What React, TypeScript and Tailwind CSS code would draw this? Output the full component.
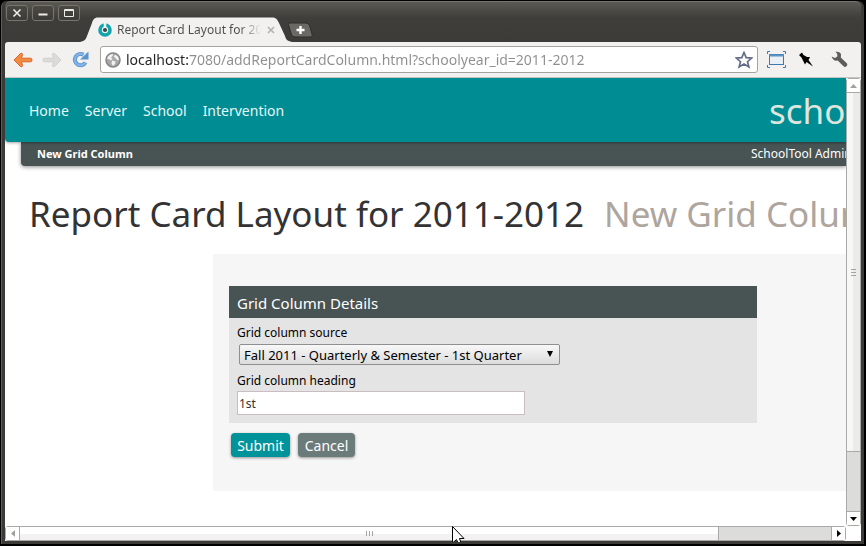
import { useState } from "react";
import type { ReactNode } from "react";

const navItems = ["Home", "Server", "School", "Intervention"];

function WindowButton({ label, children }: { label: string; children: ReactNode }) {
  return (
    <button
      type="button"
      aria-label={label}
      className="flex h-4 w-[22px] items-center justify-center rounded-[3px] border border-[#77756e] bg-linear-to-b from-[#4a4943] to-[#3c3b37]"
    >
      <svg width="12" height="10" viewBox="0 0 12 10" fill="none" stroke="#eeece6">
        {children}
      </svg>
    </button>
  );
}

function TitleBar() {
  return (
    <header className="flex h-[41px] shrink-0 items-start rounded-t-md border-t border-[#77756e] bg-linear-to-b from-[#5a5953] via-[#3f3e3a] via-40% to-[#3c3b37] pl-[1px]">
      <div className="flex gap-1 pt-[3px]">
        <WindowButton label="Close">
          <path d="M2.5 1.5l7 7M9.5 1.5l-7 7" strokeWidth="1.6" />
        </WindowButton>
        <WindowButton label="Minimize">
          <path d="M1.5 6.5h9" strokeWidth="2" />
        </WindowButton>
        <WindowButton label="Maximize">
          <path d="M1.5 1.5h9v7h-9zM1.5 2.5h9" />
        </WindowButton>
      </div>
      <div className="flex h-10 items-end">
        <div className="relative flex h-[25px] w-[212px] items-center pr-4 pl-[18px]">
          <svg className="absolute inset-0" width="212" height="25" viewBox="0 0 212 25">
            <path
              d="M0 25C5 24 6 22 7 19L12 6C13 2 15 .5 18 .5H192C196 .5 197 2 199 6L205 19C206 23 208 24 212 25Z"
              fill="#f2f1f0"
            />
          </svg>
          <svg className="relative shrink-0" width="14" height="14" viewBox="0 0 14 14">
            <circle cx="7" cy="7" r="5" fill="none" stroke="#0ea5ad" strokeWidth="3.6" />
            <path d="M5.7 0h2.6v5H5.7z" fill="#f2f1f0" />
            <circle cx="7" cy="7" r="2.1" fill="#37474a" />
          </svg>
          <span className="relative ml-[5px] w-[144px] overflow-hidden bg-linear-to-r from-[#4c4c4c] from-85% to-[#f2f1f0] bg-clip-text text-xs whitespace-nowrap text-transparent">
            Report Card Layout for 2011-2012
          </span>
          <button type="button" aria-label="Close tab" className="relative ml-[6px]">
            <svg width="8" height="8" viewBox="0 0 8 8" stroke="#b5b3b0" strokeWidth="1.7">
              <path d="M1 1l6 6M7 1L1 7" />
            </svg>
          </button>
        </div>
        <button type="button" aria-label="New tab" className="-ml-1 mb-1">
          <svg width="25" height="16" viewBox="0 0 25 16">
            <path
              d="M2 1H17C20 1 21 2 22 5L24 12C24.500 14 24 15 22 15H8C5 15 4 14 3 11L.8 4C.3 2 .5 1 2 1Z"
              fill="#6a6963"
              stroke="#2f2e2b"
            />
            <path d="M12.500 4v8M8.500 8h8" stroke="#fff" strokeWidth="2.4" />
          </svg>
        </button>
      </div>
    </header>
  );
}

function ArrowIcon({ flip, fill, stroke }: { flip?: boolean; fill: string; stroke: string }) {
  return (
    <svg className={flip ? "-scale-x-100" : ""} width="20" height="16" viewBox="0 0 20 16">
      <path
        d="M1 8L7.500 1.500Q9.500 .5 9.500 2.500L8.500 6.200H17.500Q19 6.200 19 8T17.500 9.800H8.500L9.500 13.500Q9.500 15.500 7.500 14.500Z"
        fill={fill}
        stroke={stroke}
      />
    </svg>
  );
}

function Toolbar() {
  return (
    <div className="flex h-9 shrink-0 items-center rounded-t-[3px] border-b border-[#c5c3c0] bg-[#f2f1f0] pr-[13px] pl-2">
      <div className="flex items-center gap-[9px]">
        <button type="button" aria-label="Back">
          <ArrowIcon fill="#f28a42" stroke="#d9672a" />
        </button>
        <button type="button" aria-label="Forward">
          <ArrowIcon flip fill="#dddbd9" stroke="#d0cecc" />
        </button>
        <button type="button" aria-label="Reload" className="ml-[1px]">
          <svg width="17" height="17" viewBox="0 0 17 17">
            <path d="M13.500 11.500A5.700 5.700 0 1 1 11.500 3.700" fill="none" stroke="#5b93cf" strokeWidth="4" />
            <path d="M16.500 .5V8.500H8Z" fill="#5b93cf" />
            <path d="M13.500 11.500A5.700 5.700 0 1 1 11.500 3.700" fill="none" stroke="#84b3e6" strokeWidth="2.200" />
          </svg>
        </button>
      </div>
      <div className="ml-[11px] flex h-[27px] grow items-center rounded-[3px] border border-[#a5a3a0] bg-white px-1">
        <svg className="shrink-0" width="16" height="16" viewBox="0 0 16 16">
          <circle cx="8" cy="8" r="7" fill="#a9a9a9" stroke="#858585" strokeWidth="1.500" />
          <path
            d="M3 4.500Q5 1.500 8 2L7.500 4 6 5.500 7.500 7 5.500 8.500 4 7 2 7ZM10 2.500L13 4.500 14 8 12 8 10.500 6 9 5ZM7 8.500L10.500 9.500 10 12 8 14 6.500 11.500Z"
            fill="#f2f2f2"
          />
        </svg>
        <label htmlFor="address" className="sr-only">
          Address
        </label>
        <input
          id="address"
          type="text"
          defaultValue="localhost:7080/addReportCardColumn.html?schoolyear_id=2011-2012"
          className="ml-[5px] h-6 min-w-0 grow bg-linear-to-r from-[#222] from-[62px] to-[#8e8e8e] to-[62px] bg-clip-text text-sm leading-6 text-transparent outline-none"
        />
        <button type="button" aria-label="Bookmark this page">
          <svg width="18" height="18" viewBox="0 0 18 18">
            <path
              d="M9 1.500L11.200 6.700 16.700 7.100 12.500 10.700 13.900 16 9 13.100 4.100 16 5.500 10.700 1.300 7.100 6.800 6.700Z"
              fill="#fff"
              stroke="#646d86"
              strokeWidth="1.700"
            />
          </svg>
        </button>
      </div>
      <div className="ml-[9px] flex items-center">
        <button type="button" aria-label="Window capture">
          <svg width="19" height="17" viewBox="0 0 19 17" fill="none" stroke="#3d78ae">
            <rect x="2.500" y="3.500" width="14" height="10" fill="#e8f0f6" />
            <path d="M2 4.500h15" stroke="#5b93c5" strokeWidth="2" />
            <path d="M.5 3V.5H3M16 .5h2.500V3M.5 14v2.500H3M16 16.500h2.500V14" />
          </svg>
        </button>
        <button type="button" aria-label="Pin" className="ml-3">
          <svg width="16" height="16" viewBox="0 0 16 16">
            <path d="M1 3L4 .5 5.500 3 9 5 12 5 10.500 8 15 14.500 8.500 10 7 12.500 5.500 9.500 3.500 5.500Z" fill="#000" />
          </svg>
        </button>
        <button type="button" aria-label="Settings" className="ml-[17px]">
          <svg width="17" height="17" viewBox="0 0 17 17">
            <path
              d="M4.500 .8Q9 0 10 3.500L9.800 6.500 16 12.500Q17 14 15.500 15.300T12.500 15.300L6.700 9.500Q2 10.500 .7 5.500L4 7 6.300 5.500 6.300 3Z"
              fill="#5c5c5c"
            />
          </svg>
        </button>
      </div>
    </div>
  );
}

function SiteHeader() {
  return (
    <>
      <div className="relative z-10 flex h-16 items-center rounded-bl-[4px] bg-[#008c93] pt-[2px] pl-6 text-white shadow-[0_1px_3px_rgba(0,0,0,0.35)]">
        <nav className="flex gap-4 text-sm text-[#e6f7f7]">
          {navItems.map((item) => (
            <a key={item} href="#">
              {item}
            </a>
          ))}
        </nav>
        <a href="#" className="ml-auto w-[77px] text-[35px] leading-10 whitespace-nowrap text-[#dde5dc]">
          schooltool
        </a>
      </div>
      <div className="ml-4 flex h-6 items-center rounded-bl-[4px] bg-[#485353] pl-4 text-xs text-white shadow-[0_1px_4px_rgba(0,0,0,0.45)]">
        <span className="text-[11px] font-bold">New Grid Column</span>
        <a href="#" className="ml-auto w-[95px] whitespace-nowrap">
          SchoolTool Administrator
        </a>
      </div>
    </>
  );
}

function ColumnForm() {
  const [heading, setHeading] = useState("1st");
  return (
    <form className="ml-52 bg-[#f6f6f6] px-4 pt-8 pb-[34px]" onSubmit={(e) => e.preventDefault()}>
      <section className="max-w-[528px] bg-[#e4e4e4]">
        <h2 className="h-8 bg-[#485353] px-2 pt-[1px] text-[15px] leading-8 text-white">Grid Column Details</h2>
        <div className="flex flex-col px-2 pt-[5px] pb-2 text-xs text-black">
          <label htmlFor="source" className="leading-5">
            Grid column source
          </label>
          <div className="relative mt-[1px] ml-[2px] w-[321px]">
            <select
              id="source"
              className="h-[21px] w-full appearance-none rounded-[2px] border border-[#8f8f8f] bg-linear-to-b from-[#f8f8f8] to-[#dcdcdc] pt-[1px] pl-1 text-[13px] leading-[19px]"
            >
              <option>Fall 2011 - Quarterly &amp; Semester - 1st Quarter</option>
            </select>
            <svg className="pointer-events-none absolute top-[7px] right-[7px]" width="6" height="6" viewBox="0 0 6 6">
              <path d="M0 0h6L3 6z" fill="#000" />
            </svg>
          </div>
          <label htmlFor="heading" className="mt-[6px] leading-5">
            Grid column heading
          </label>
          <input
            id="heading"
            type="text"
            value={heading}
            onChange={(e) => setHeading(e.target.value)}
            className="h-6 w-72 border border-[#c9bdc1] bg-white px-[1px] text-xs text-[#333] outline-none"
          />
        </div>
      </section>
      <div className="mt-[10px] ml-[2px] flex gap-2 text-sm text-white">
        <button type="submit" className="h-6 w-[59px] rounded-[4px] bg-[#00949a] pt-[1px] shadow-[0_1px_3px_rgba(0,0,0,0.4)]">
          Submit
        </button>
        <button type="button" className="h-6 w-[57px] rounded-[4px] bg-[#6b7b7a] pt-[1px] shadow-[0_1px_3px_rgba(0,0,0,0.4)]">
          Cancel
        </button>
      </div>
    </form>
  );
}

function VerticalScrollbar() {
  return (
    <div className="flex w-[15px] shrink-0 flex-col rounded-[3px] border border-[#a9a9a7] bg-[#dcdcda]">
      <div className="flex h-[14px] shrink-0 items-center justify-center border-b border-[#a9a9a7] bg-white">
        <svg width="7" height="4" viewBox="0 0 7 4">
          <path d="M0 4L3.500 0 7 4z" fill="#a0a09e" />
        </svg>
      </div>
      <div className="flex grow-[36] items-center justify-center border-b border-[#a9a9a7] bg-linear-to-r from-[#f7f7f6] from-50% to-[#ebebe9] to-50%">
        <svg width="5" height="7" viewBox="0 0 5 7" stroke="#a3a3a1">
          <path d="M0 .5h5M0 3.500h5M0 6.500h5" />
        </svg>
      </div>
      <div className="grow-[6]" />
      <div className="flex h-[14px] shrink-0 items-center justify-center border-t border-[#a9a9a7] bg-white">
        <svg width="7" height="4" viewBox="0 0 7 4">
          <path d="M0 0L3.500 4 7 0z" fill="#000" />
        </svg>
      </div>
    </div>
  );
}

function HorizontalScrollbar() {
  return (
    <div className="flex h-[15px] shrink-0 bg-white pr-[15px]">
      <div className="flex grow rounded-[3px] border border-[#a9a9a7] bg-[#dcdcda]">
        <div className="flex w-[14px] shrink-0 items-center justify-center border-r border-[#a9a9a7] bg-white">
          <svg width="4" height="7" viewBox="0 0 4 7">
            <path d="M4 0L0 3.500 4 7z" fill="#a0a09e" />
          </svg>
        </div>
        <div className="flex grow-[699] items-center justify-center border-r border-[#a9a9a7] bg-linear-to-b from-white from-50% to-[#f2f2f2] to-50%">
          <svg width="7" height="5" viewBox="0 0 7 5" stroke="#a3a3a1">
            <path d="M.5 0v5M3.500 0v5M6.500 0v5" />
          </svg>
        </div>
        <div className="grow-[113]" />
        <div className="flex w-[14px] shrink-0 items-center justify-center border-l border-[#a9a9a7] bg-white">
          <svg width="4" height="7" viewBox="0 0 4 7">
            <path d="M0 0L4 3.500 0 7z" fill="#000" />
          </svg>
        </div>
      </div>
    </div>
  );
}

export default function App() {
  return (
    <div className="relative flex h-screen flex-col overflow-hidden bg-black pt-[1px] pr-[2px] pb-[2px] pl-[1px] font-['Noto_Sans','Open_Sans',sans-serif]">
      <div className="flex min-h-0 grow flex-col rounded-t-md border-l border-[#5f5e59] bg-[#3c3b37] pr-[3px] pb-[3px] pl-[3px]">
        <TitleBar />
        <Toolbar />
        <div className="flex min-h-0 grow bg-white">
          <main className="min-w-0 grow overflow-hidden bg-white">
            <SiteHeader />
            <h1 className="mt-7 mb-5 flex h-10 items-center gap-5 pl-6 text-[35px] whitespace-nowrap text-[#333]">
              <span>Report Card Layout for 2011-2012</span>
              <span className="text-[#ada59e]">New Grid Column</span>
            </h1>
            <ColumnForm />
          </main>
          <VerticalScrollbar />
        </div>
        <HorizontalScrollbar />
      </div>
      <svg className="absolute bottom-[4px] left-[452px]" width="13" height="16" viewBox="0 0 13 16">
        <path d="M.5 .5V17L4.500 13.500 6.500 18 9 17 7.500 12.500H12Z" fill="#fff" stroke="#000" />
      </svg>
    </div>
  );
}
